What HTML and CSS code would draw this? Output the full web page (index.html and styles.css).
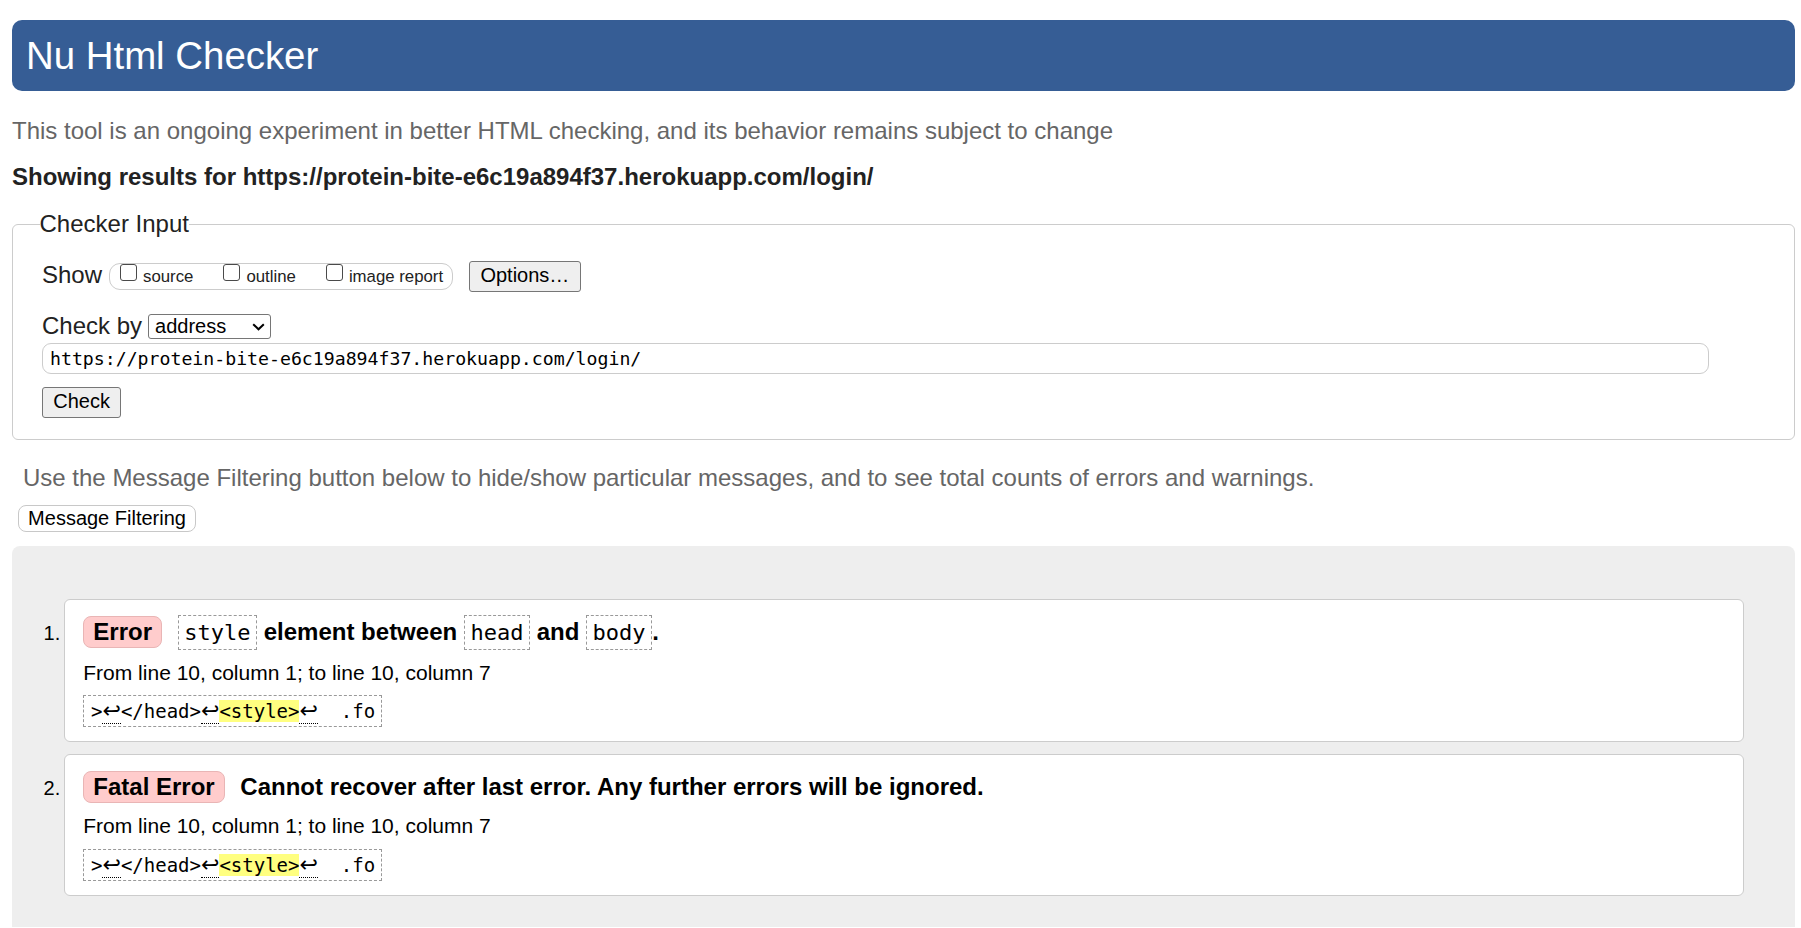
FILE: index.html
```html
<!DOCTYPE html>
<html lang="en">
<head>
<meta charset="utf-8">
<title>Showing results for https://protein-bite-e6c19a894f37.herokuapp.com/login/ - Nu Html Checker</title>
<link rel="stylesheet" href="styles.css">
</head>
<body>
<h1 class="title">Nu Html Checker</h1>
<p class="about">This tool is an ongoing experiment in better HTML checking, and its behavior remains subject to change</p>
<p class="showing">Showing results for https://protein-bite-e6c19a894f37.herokuapp.com/login/</p>
<form class="checker">
  <fieldset class="input-set">
    <legend class="input-legend">Checker Input</legend>
    <div class="row row-show">
      <span class="row-label">Show</span>
      <span class="pill">
        <label class="opt"><input type="checkbox" class="cb"><span>source</span></label>
        <label class="opt"><input type="checkbox" class="cb"><span>outline</span></label>
        <label class="opt"><input type="checkbox" class="cb"><span>image report</span></label>
      </span>
      <button type="button" class="btn btn-options">Options…</button>
    </div>
    <div class="row row-by">
      <span class="row-label">Check by</span>
      <span class="select-wrap">
        <select class="select"><option>address</option></select>
        <svg class="chev" width="13" height="8" viewBox="0 0 13 8"><path d="M1.2 1.2 L6.5 6.3 L11.8 1.2" fill="none" stroke="#000" stroke-width="2"/></svg>
      </span>
    </div>
    <input class="url" type="url" value="https://protein-bite-e6c19a894f37.herokuapp.com/login/">
    <button type="button" class="btn btn-check">Check</button>
  </fieldset>
</form>
<p class="filter-info">Use the Message Filtering button below to hide/show particular messages, and to see total counts of errors and warnings.</p>
<button type="button" class="btn-filter">Message Filtering</button>
<div class="results">
  <ol class="msgs">
    <li class="msg">
      <span class="num">1.</span>
      <div class="card">
        <p class="msg-head"><strong class="badge">Error</strong> <span class="msg-text"><code class="code">style</code> element between <code class="code">head</code> and <code class="code">body</code>.</span></p>
        <p class="loc">From line 10, column 1; to line 10, column 7</p>
        <code class="extract">&gt;<span class="lf">↩</span>&lt;/head&gt;<span class="lf">↩</span><mark class="hl">&lt;style&gt;</mark><span class="lf">↩</span>  .fo</code>
      </div>
    </li>
    <li class="msg">
      <span class="num">2.</span>
      <div class="card">
        <p class="msg-head"><strong class="badge">Fatal Error</strong> <span class="msg-text">Cannot recover after last error. Any further errors will be ignored.</span></p>
        <p class="loc">From line 10, column 1; to line 10, column 7</p>
        <code class="extract">&gt;<span class="lf">↩</span>&lt;/head&gt;<span class="lf">↩</span><mark class="hl">&lt;style&gt;</mark><span class="lf">↩</span>  .fo</code>
      </div>
    </li>
  </ol>
</div>
</body>
</html>
```

FILE: styles.css
```css
* { box-sizing: border-box; }

html { background: #fff; }

body {
  margin: 0;
  padding: 20px 6px 0 12px;
  font-family: "Liberation Sans", Arial, sans-serif;
  font-size: 24px;
  color: #222;
}

.title {
  margin: 0;
  padding: 14px 14px 13px;
  font-size: 38.4px;
  line-height: 44px;
  font-weight: normal;
  color: #fff;
  background: #365d95;
  border-radius: 10px;
}

.about {
  margin: 26px 0 0;
  line-height: 28px;
  color: #666;
}

.showing {
  margin: 18px 0 0;
  line-height: 28px;
  font-weight: bold;
  color: #222;
}

.checker { margin: 19px 0 0; }

.input-set {
  margin: 0;
  min-width: 0;
  padding: 22px 28px 21px 29px;
  border: 1px solid #ccc;
  border-radius: 6px;
}

.input-legend {
  padding: 0;
  margin-left: -2.5px;
  font-size: 24px;
  line-height: 28px;
  color: #222;
}

.row {
  display: flex;
  align-items: flex-start;
}

.row-by { margin-top: 20px; }

.row-label { line-height: 28px; }

.row-show .row-label { margin-top: 1px; }

.pill {
  display: flex;
  align-items: flex-start;
  gap: 30px;
  height: 27px;
  margin: 3px 0 0 7px;
  padding: 0 9px 0 10px;
  border: 1px solid #ccc;
  border-radius: 11px;
  font-size: 16.8px;
  line-height: 26px;
  color: #222;
}

.opt {
  display: flex;
  align-items: flex-start;
  gap: 6px;
}

.cb {
  appearance: none;
  -webkit-appearance: none;
  margin: 0;
  width: 17px;
  height: 17px;
  border: 1px solid #4a4a4a;
  border-radius: 3px;
  background: #fff;
}

.btn {
  height: 31px;
  padding: 0 10.3px 2px;
  font-family: "Liberation Sans", Arial, sans-serif;
  font-size: 20px;
  line-height: 23px;
  color: #000;
  background: #efefef;
  border: 1px solid #767676;
  border-radius: 3px;
}

.btn-options { margin: 1px 0 0 16px; }

.select-wrap {
  position: relative;
  display: block;
  margin: 2px 0 0 6px;
}

.select {
  appearance: none;
  -webkit-appearance: none;
  display: block;
  width: 123px;
  height: 25px;
  margin: 0;
  padding: 0 0 1px 6px;
  font-family: "Liberation Sans", Arial, sans-serif;
  font-size: 20px;
  color: #000;
  background: #fff;
  border: 1px solid #767676;
  border-radius: 3px;
}

.chev {
  position: absolute;
  right: 6px;
  top: 8.5px;
  pointer-events: none;
}

.url {
  display: block;
  width: calc(100% - 57px);
  height: 31px;
  margin: 3px 0 0;
  padding: 0 7px;
  font-family: "DejaVu Sans Mono", "Liberation Mono", monospace;
  font-size: 18.2px;
  color: #000;
  background: #fff;
  border: 1px solid #ccc;
  border-radius: 9px;
}

.btn-check {
  display: block;
  margin-top: 13px;
}

.filter-info {
  margin: 24px 0 0 11px;
  line-height: 28px;
  color: #666;
}

.btn-filter {
  display: block;
  height: 27px;
  margin: 13px 0 0 6.3px;
  padding: 0 8.8px;
  font-family: "Liberation Sans", Arial, sans-serif;
  font-size: 20px;
  line-height: 23px;
  color: #000;
  background: #fff;
  border: 1px solid #c8c8c8;
  border-radius: 8px;
}

.results {
  margin-top: 13.6px;
  padding: 53.7px 51.5px 31.6px 0;
  background: #eee;
  border-radius: 8px 8px 0 0;
}

.msgs {
  display: flex;
  flex-direction: column;
  gap: 12.3px;
  margin: 0;
  padding: 0;
  list-style: none;
}

.msg {
  display: flex;
  align-items: flex-start;
}

.num {
  flex: 0 0 52.3px;
  margin-top: 21.4px;
  padding-right: 4px;
  text-align: right;
  font-size: 20px;
  line-height: 24px;
  color: #000;
}

.card {
  flex: 1;
  min-width: 0;
  padding: 13.5px 18px 14px;
  color: #000;
  background: #fff;
  border: 1px solid #ccc;
  border-radius: 6px;
}

.msg-head {
  margin: 0;
  line-height: 35px;
}

.badge {
  display: inline-block;
  margin-right: 9px;
  padding: 1px 9px;
  line-height: 28px;
  font-weight: bold;
  background: #fcc;
  border: 1px solid #e9b5b5;
  border-radius: 8px;
}

.msg-text { font-weight: bold; }

.code {
  display: inline-block;
  padding: 3px 5.6px;
  font-family: "DejaVu Sans Mono", "Liberation Mono", monospace;
  font-size: 22px;
  font-weight: normal;
  line-height: 27px;
  border: 1px dashed #999;
}

.loc {
  margin: 10.8px 0 0;
  font-size: 21px;
  line-height: 24px;
}

.extract {
  display: block;
  width: fit-content;
  margin-top: 10.3px;
  padding: 4px 6px 4px 6.7px;
  font-family: "DejaVu Sans Mono", "Liberation Mono", monospace;
  font-size: 19px;
  line-height: 22px;
  white-space: pre;
  border: 1px dashed #999;
}

.lf {
  font-family: "DejaVu Sans", sans-serif;
  font-size: 22px;
  line-height: 0;
  border-bottom: 1px dotted #000;
}

.hl {
  color: inherit;
  background: #ffff80;
}
```
